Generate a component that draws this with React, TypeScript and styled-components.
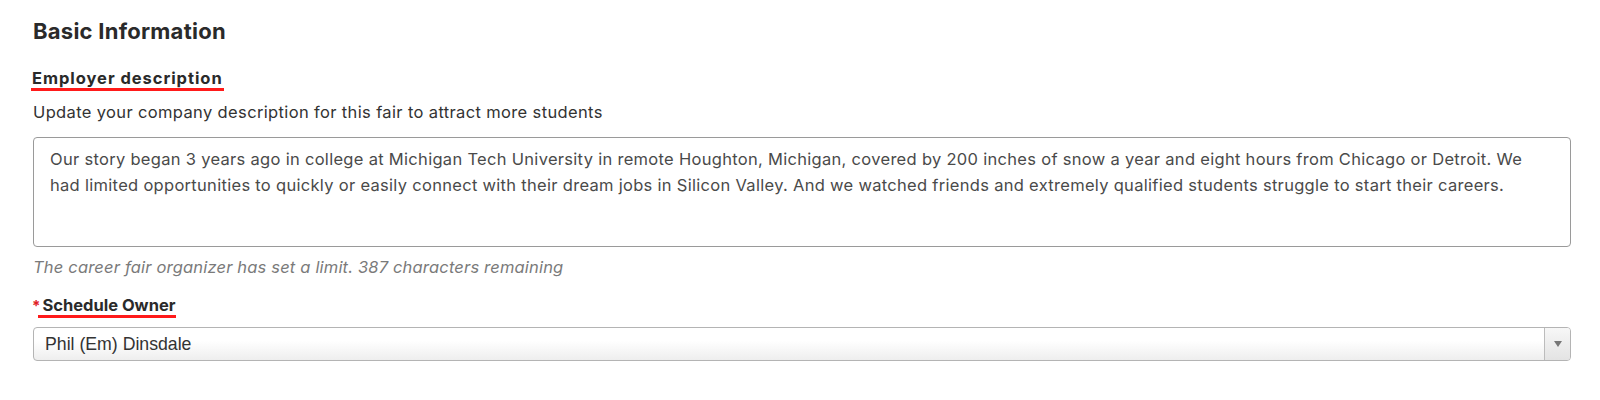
import React from "react";
import styled, { createGlobalStyle } from "styled-components";

const Global = createGlobalStyle`
  html, body { margin: 0; padding: 0; background: #fff; }
  body { font-family: Inter, "Helvetica Neue", Arial, sans-serif; color: #2b2b2b; }
  * { box-sizing: border-box; }
`;

const Page = styled.div`
  padding: 17px 29px 0 33px;
  display: flex;
  flex-direction: column;
`;

const Title = styled.h2`
  margin: 0;
  font-size: 22px;
  line-height: 28px;
  font-weight: 700;
  letter-spacing: 0.25px;
  color: #2a2a2a;
`;

const LabelRow = styled.div<{ $mt: number }>`
  margin-top: ${(p) => p.$mt}px;
  display: flex;
  align-items: flex-start;
`;

const Label = styled.span<{ $spacing?: number; $pl?: number }>`
  display: inline-block;
  font-size: 16.5px;
  line-height: 19px;
  font-weight: 700;
  letter-spacing: ${(p) => p.$spacing ?? 0}px;
  color: #2a2a2a;
  border-bottom: 3px solid #ff1a1a;
  padding: 0 1px 0 ${(p) => p.$pl ?? 1}px;
  margin-left: ${(p) => (p.$pl ? 0 : -2)}px;
`;

const Star = styled.span`
  color: #e0201f;
  font-size: 15px;
  line-height: 19px;
  font-weight: 700;
  margin-left: -1px;
  margin-right: -2px;
`;

const Hint = styled.p`
  margin: 11px 0 0;
  font-size: 16.5px;
  line-height: 20px;
  letter-spacing: 0.36px;
  color: #333;
`;

const TextArea = styled.textarea`
  margin-top: 15px;
  width: 100%;
  height: 110px;
  border: 1px solid #9a9a9a;
  border-radius: 4px;
  padding: 8px 16px;
  font-family: inherit;
  font-size: 16.5px;
  line-height: 26px;
  letter-spacing: 0.3px;
  color: #4a4a4a;
  resize: none;
  outline: none;
  display: block;
`;

const Helper = styled.p`
  margin: 10px 0 0;
  font-size: 16.5px;
  line-height: 20px;
  letter-spacing: 0.18px;
  font-style: italic;
  color: #7a7a7a;
`;

const Select = styled.div`
  margin-top: 9px;
  height: 34px;
  width: 100%;
  display: flex;
  border: 1px solid #b4b4b4;
  border-radius: 4px;
  background: linear-gradient(#ffffff 40%, #eeeeee);
  overflow: hidden;
`;

const SelectValue = styled.div`
  flex: 1;
  display: flex;
  align-items: center;
  padding-left: 11px;
  font-family: "Liberation Sans", Arial, sans-serif;
  font-size: 17.7px;
  color: #333;
`;

const Arrow = styled.div`
  width: 26px;
  border-left: 1px solid #bcbcbc;
  display: flex;
  align-items: center;
  justify-content: center;
  background: linear-gradient(#f7f7f7, #e3e3e3);
  &::after {
    content: "";
    border-left: 4px solid transparent;
    border-right: 4px solid transparent;
    border-top: 6px solid #777;
  }
`;

const text =
  "Our story began 3 years ago in college at Michigan Tech University in remote Houghton, Michigan, covered by 200 inches of snow a year and eight hours from Chicago or Detroit. We had limited opportunities to quickly or easily connect with their dream jobs in Silicon Valley. And we watched friends and extremely qualified students struggle to start their careers.";

export default function App() {
  return (
    <>
      <Global />
      <Page>
        <Title>Basic Information</Title>
        <LabelRow $mt={24}>
          <Label $spacing={0.95}>Employer description</Label>
        </LabelRow>
        <Hint>Update your company description for this fair to attract more students</Hint>
        <TextArea defaultValue={text} />
        <Helper>The career fair organizer has set a limit. 387 characters remaining</Helper>
        <LabelRow $mt={19}>
          <Star>*</Star>
          <Label $pl={4}>Schedule Owner</Label>
        </LabelRow>
        <Select>
          <SelectValue>Phil (Em) Dinsdale</SelectValue>
          <Arrow />
        </Select>
      </Page>
    </>
  );
}
